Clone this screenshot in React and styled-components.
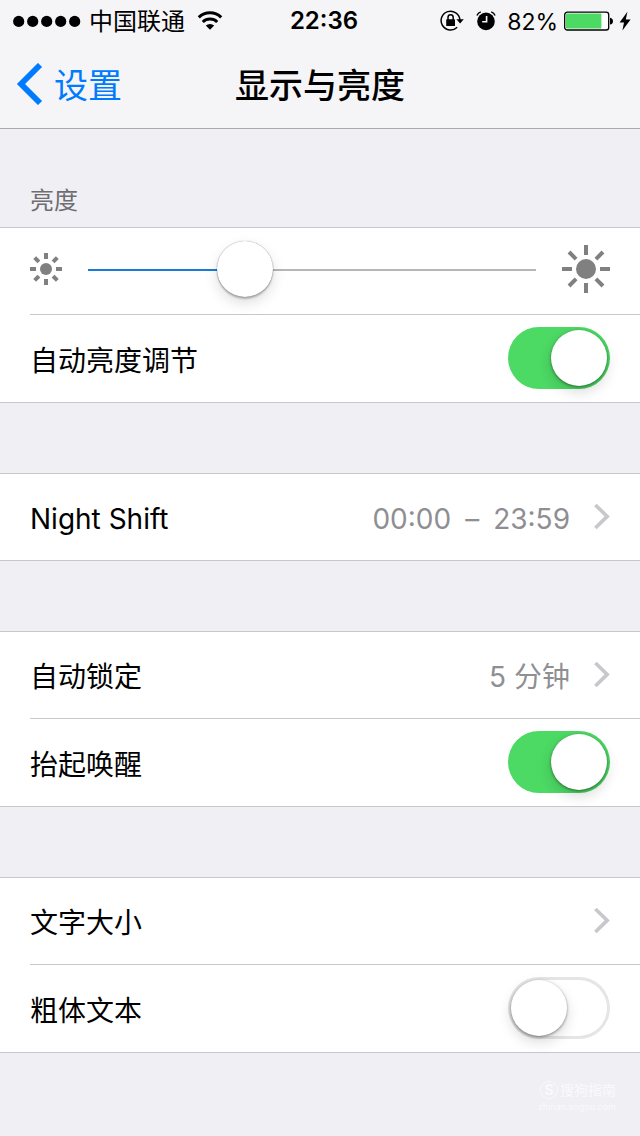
import React, { useId, useState } from "react";
import styled, { createGlobalStyle } from "styled-components";

const GlobalStyle = createGlobalStyle`
  * {
    box-sizing: border-box;
  }
  body {
    margin: 0;
    min-height: 100vh;
    background-color: #efeff4;
    color: #000;
    font-family: Inter, "Noto Sans CJK SC", sans-serif;
    font-size: 28px;
    line-height: 40px;
  }
  button, input {
    font: inherit;
    color: inherit;
    margin: 0;
  }
`;

const Header = styled.header`
  background-color: #f5f5f7;
  border-bottom: 1px solid #a9a9b2;
`;

// Status bar
const StatusBar = styled.div`
  display: grid;
  grid-template-columns: 1fr auto 1fr;
  align-items: center;
  height: 40px;
  padding: 0 9px 0 13px;
  font-size: 24px;
`;

const StatusSide = styled.div`
  display: flex;
  align-items: center;
  justify-content: ${(props) => (props.$end ? "flex-end" : "flex-start")};
  gap: ${(props) => (props.$end ? "6px" : "8px")};
`;

const StatusIcons = styled.div`
  display: flex;
  align-items: center;
  gap: 12px;
  margin-right: 5px;
`;

const StatusText = styled.span`
  padding-top: 2px;
`;

const BatteryLevel = styled(StatusText)`
  font-size: 23px;
`;

const Clock = styled.time`
  padding-left: 4px;
  font-weight: 600;
`;

// Navigation bar
const NavBar = styled.nav`
  display: grid;
  grid-template-columns: 1fr auto 1fr;
  align-items: center;
  height: 88px;
  padding: 0 16px;
  font-size: 34px;
`;

const BackLink = styled.a`
  display: flex;
  align-items: center;
  gap: 11px;
  color: #007aff;
  text-decoration: none;
`;

const BackText = styled.span`
  padding-top: 4px;
`;

const Title = styled.h1`
  margin: 0;
  padding-top: 3px;
  font-size: 34px;
  font-weight: 500;
`;

// Settings list
const Settings = styled.main`
  display: flex;
  flex-direction: column;
  gap: 70px;
`;

const Section = styled.section``;

const SectionTitle = styled.h2`
  margin: 0;
  padding: 52px 30px 6px;
  color: #6d6d72;
  font-size: 24px;
  font-weight: 400;
`;

const Group = styled.div`
  background-color: #fff;
  border-top: 1px solid #c8c7cc;
  border-bottom: 1px solid #c8c7cc;
`;

const Divider = styled.hr`
  margin: 0 0 0 30px;
  border: 0;
  border-top: 1px solid #c8c7cc;
`;

const Row = styled.div`
  display: flex;
  align-items: center;
  width: 100%;
  min-height: 86px;
  padding: 0 30px;
  border: 0;
  background: none;
  text-align: left;
`;

const SliderRow = styled(Row)`
  padding-bottom: 4px;
`;

const ToggleRow = styled(Row)`
  min-height: 87px;
  padding-bottom: 2px;
`;

const RowLabel = styled.span`
  flex: 1;
  padding-top: 4px;
`;

const ToggleLabel = styled.label`
  flex: 1;
  padding-top: 6px;
`;

const RowValue = styled.span`
  display: flex;
  gap: 14px;
  padding-top: 4px;
  margin-right: 24px;
  color: #8e8e93;
`;

const Switch = styled.input`
  appearance: none;
  width: 102px;
  height: 62px;
  padding: 3px;
  border-radius: 31px;
  background-color: #fff;
  box-shadow: inset 0 0 0 3px #e5e5e5;
  cursor: pointer;

  &::before {
    content: "";
    display: block;
    width: 56px;
    height: 56px;
    border-radius: 50%;
    background-color: #fff;
    box-shadow: 0 1px 3px rgba(0, 0, 0, 0.45), 0 6px 14px rgba(0, 0, 0, 0.15);
  }

  &:checked {
    background-color: #4cd964;
    box-shadow: none;
  }

  &:checked::before {
    margin-left: 40px;
  }
`;

const Slider = styled.input`
  appearance: none;
  flex: 1;
  min-width: 0;
  height: 56px;
  margin: 2px 26px 0;
  background: none;
  cursor: pointer;

  &::-webkit-slider-runnable-track {
    height: 2px;
    background: linear-gradient(to right, #1a7bd8 var(--level), #b6b6b6 var(--level));
  }

  &::-webkit-slider-thumb {
    appearance: none;
    width: 56px;
    height: 56px;
    margin-top: -28px;
    border-radius: 50%;
    background-color: #fff;
    box-shadow: 0 0 1px rgba(0, 0, 0, 0.5), 0 2px 2px rgba(0, 0, 0, 0.25), 0 6px 14px rgba(0, 0, 0, 0.13);
  }
`;

// Watermark
const Watermark = styled.footer`
  display: flex;
  flex-direction: column;
  align-items: flex-end;
  padding: 27px 24px 0;
  color: #fafafc;
  font-size: 9px;
  line-height: 14px;
`;

const Brand = styled.div`
  display: flex;
  align-items: center;
  gap: 2px;
  font-size: 14px;
  line-height: 20px;
`;

const BrandMark = styled.span`
  width: 18px;
  height: 18px;
  border: 1px solid #fafafc;
  border-radius: 50%;
  font-weight: 700;
  line-height: 16px;
  text-align: center;
`;

const SignalDots = () => (
  <svg width="68" height="12" viewBox="0 0 68 12" aria-hidden="true">
    {[6, 20, 34, 48, 62].map((x) => (
      <circle key={x} cx={x - 0.3} cy="6.4" r="5.6" />
    ))}
  </svg>
);

const WifiSvg = styled.svg`
  margin-left: 4px;
`;

const WifiIcon = () => (
  <WifiSvg width="26" height="20" viewBox="0 0 26 20" fill="none" stroke="#000" strokeWidth="3" aria-hidden="true">
    <path d="M1.8 6.4a16 16 0 0 1 22.4 0" />
    <path d="M5.8 11a10.4 10.4 0 0 1 14.4 0" />
    <path d="M13 18.8l-4.2-4.2a6 6 0 0 1 8.4 0z" fill="#000" stroke="none" />
  </WifiSvg>
);

const RotationLockIcon = () => (
  <svg width="24" height="22" viewBox="0 0 24 22" aria-hidden="true">
    <path d="M17.2 17.2A9.4 9.4 0 1 1 19.9 9.9" fill="none" stroke="#000" strokeWidth="1.5" />
    <path d="M16.4 9.3h7.4l-3.7 4.2z" />
    <rect x="6.2" y="9.2" width="8.8" height="6.8" rx="0.6" />
    <path d="M8 10V7.4a2.6 2.6 0 0 1 5.2 0V10" fill="none" stroke="#000" strokeWidth="1.5" />
  </svg>
);

const AlarmIcon = () => (
  <svg width="20" height="20" viewBox="0 0 20 20" aria-hidden="true">
    <circle cx="10" cy="10.4" r="8.8" />
    <path d="M0.9 4.4Q2 1.8 4.8 0.9M19.1 4.4Q18 1.8 15.2 0.9" fill="none" stroke="#000" strokeWidth="1.4" />
    <path d="M10.6 5v5.8H6.2" fill="none" stroke="#f5f5f7" strokeWidth="1.6" />
  </svg>
);

const BatteryIcon = () => (
  <svg width="49" height="20" viewBox="0 0 49 20" aria-hidden="true">
    <rect x="0.7" y="1.2" width="44" height="17.8" rx="2.6" fill="#fff" stroke="#000" strokeWidth="1.3" />
    <rect x="2" y="2.6" width="35.4" height="15" rx="1" fill="#4cd964" />
    <path d="M46 6.8q3 .6 3 3.4t-3 3.4z" />
  </svg>
);

const BoltIcon = () => (
  <svg width="12" height="20" viewBox="0 0 12 20" aria-hidden="true">
    <path d="M8.4 0.8L0.6 11.4H5L3.4 19.4L11.6 8.4H6.8z" />
  </svg>
);

const BackIcon = () => (
  <svg width="27" height="42" viewBox="0 0 27 42" fill="none" stroke="currentColor" strokeWidth="5.8" aria-hidden="true">
    <path d="M24 2L5 21L24 40" />
  </svg>
);

const ChevronIcon = () => (
  <svg width="16" height="26" viewBox="0 0 16 26" fill="none" stroke="#c7c7cc" strokeWidth="3.6" aria-hidden="true">
    <path d="M1.4 1L13.2 12.4L1.4 24" />
  </svg>
);

const SunIcon = ({ size, core, inner }) => (
  <svg width={size} height={size} viewBox={`${-size / 2} ${-size / 2} ${size} ${size}`} fill="#808080" aria-hidden="true">
    <circle r={core} />
    {[0, 45, 90, 135, 180, 225, 270, 315].map((angle) => (
      <rect
        key={angle}
        x={-2}
        y={-size / 2}
        width={4}
        height={size / 2 - inner}
        transform={`rotate(${angle})`}
      />
    ))}
  </svg>
);

const BrightnessRow = () => {
  const [level, setLevel] = useState(33);

  return (
    <SliderRow>
      <SunIcon size={32} core={6} inner={10} />
      <Slider
        type="range"
        aria-label="亮度"
        min="0"
        max="100"
        value={level}
        onChange={(e) => setLevel(Number(e.target.value))}
        style={{ "--level": `${level}%` }}
      />
      <SunIcon size={48} core={10} inner={14} />
    </SliderRow>
  );
};

const SwitchRow = ({ label, defaultChecked }) => {
  const id = useId();

  return (
    <ToggleRow>
      <ToggleLabel htmlFor={id}>{label}</ToggleLabel>
      <Switch id={id} type="checkbox" role="switch" defaultChecked={defaultChecked} />
    </ToggleRow>
  );
};

const LinkRow = ({ label, children }) => (
  <Row as="button" type="button">
    <RowLabel>{label}</RowLabel>
    {children && <RowValue>{children}</RowValue>}
    <ChevronIcon />
  </Row>
);

const App = () => {
  return (
    <>
      <GlobalStyle />
      <Header>
        <StatusBar>
          <StatusSide>
            <SignalDots />
            <StatusText>中国联通</StatusText>
            <WifiIcon />
          </StatusSide>
          <Clock>22:36</Clock>
          <StatusSide $end>
            <StatusIcons>
              <RotationLockIcon />
              <AlarmIcon />
            </StatusIcons>
            <BatteryLevel>82%</BatteryLevel>
            <BatteryIcon />
            <BoltIcon />
          </StatusSide>
        </StatusBar>
        <NavBar>
          <BackLink href="#settings">
            <BackIcon />
            <BackText>设置</BackText>
          </BackLink>
          <Title>显示与亮度</Title>
        </NavBar>
      </Header>

      <Settings>
        <Section>
          <SectionTitle>亮度</SectionTitle>
          <Group>
            <BrightnessRow />
            <Divider />
            <SwitchRow label="自动亮度调节" defaultChecked />
          </Group>
        </Section>
        <Group>
          <LinkRow label="Night Shift">
            <span>00:00</span>
            <span>–</span>
            <span>23:59</span>
          </LinkRow>
        </Group>
        <Group>
          <LinkRow label="自动锁定">5 分钟</LinkRow>
          <Divider />
          <SwitchRow label="抬起唤醒" defaultChecked />
        </Group>
        <Group>
          <LinkRow label="文字大小" />
          <Divider />
          <SwitchRow label="粗体文本" />
        </Group>
      </Settings>

      <Watermark>
        <Brand>
          <BrandMark>S</BrandMark>
          <span>搜狗指南</span>
        </Brand>
        <span>zhinan.sogou.com</span>
      </Watermark>
    </>
  );
};

export default App;
